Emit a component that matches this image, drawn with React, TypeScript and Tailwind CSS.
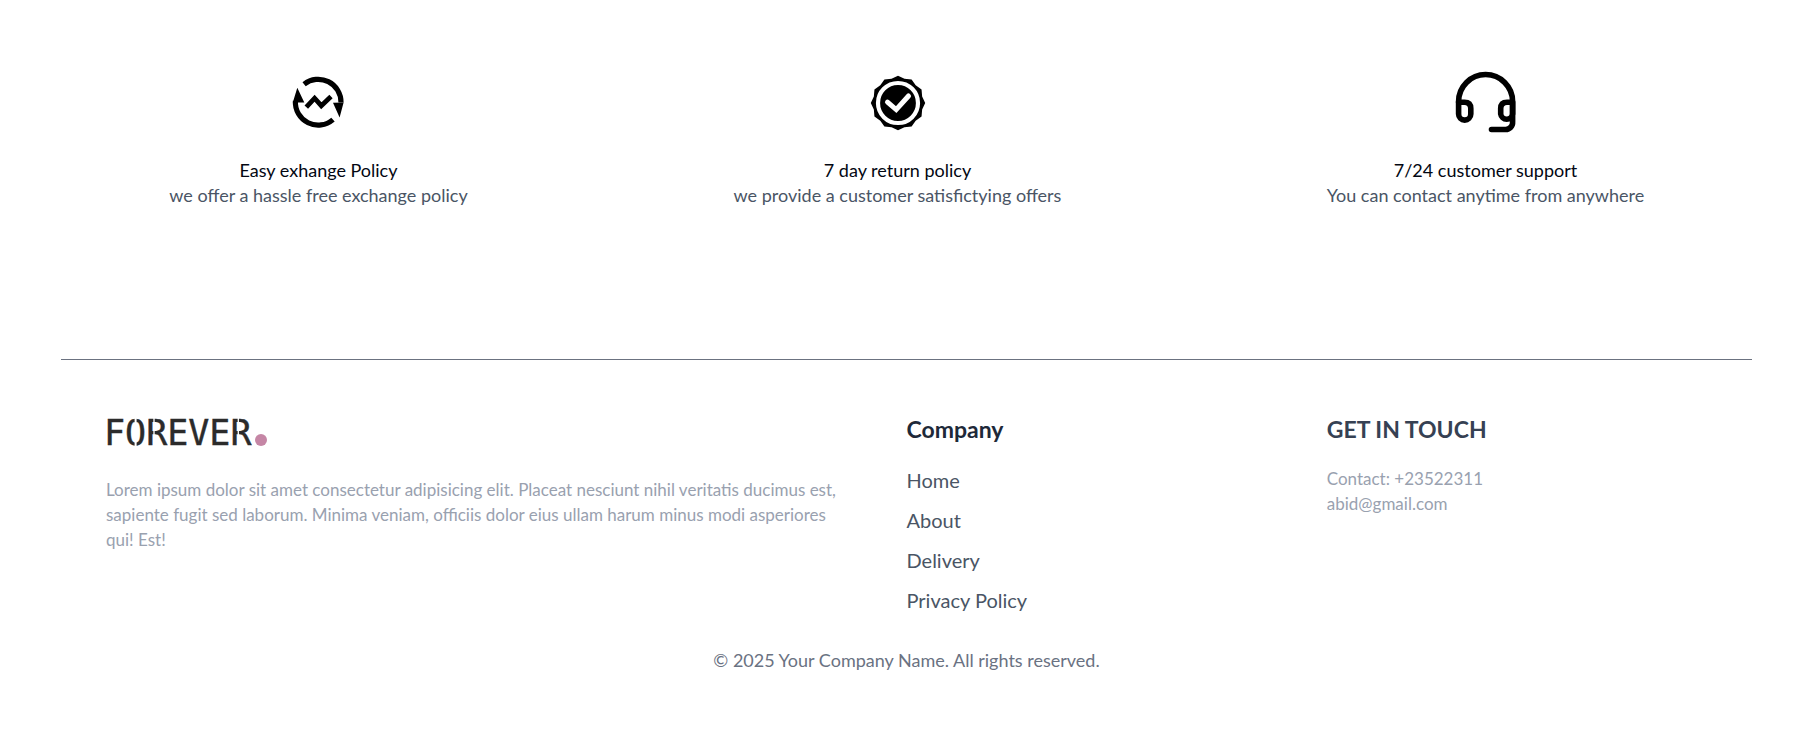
const links = ["Home", "About", "Delivery", "Privacy Policy"];

function ExchangeIcon() {
  return (
    <svg viewBox="-1 0 80 75" className="h-[75px] w-20" aria-hidden="true">
      <g fill="none" stroke="#000" strokeWidth="5.2">
        <path d="M24.1 19.2A22.8 22.8 0 0 1 61 37.5" />
        <path d="M53 54.6A22.8 22.8 0 0 1 15.4 36" />
        <path d="M26.3 42.2L34.6 33.2L41.3 40.7L51 31.6" strokeWidth="4.8" />
      </g>
      <path d="M17.3 22.8L12.8 37.5L24.3 37.5Z M53 37.8L63.6 37.5L59.6 52.5Z" />
    </svg>
  );
}

function ReturnIcon() {
  const points = Array.from({ length: 24 }, (_, i) => {
    const r = i % 2 ? 25 : 27.2;
    const a = (i * Math.PI) / 12;
    return `${38 + r * Math.sin(a)},${38 - r * Math.cos(a)}`;
  }).join(" ");
  return (
    <svg viewBox="0 0 76 75" className="h-[75px] w-[76px]" aria-hidden="true">
      <polygon points={points} />
      <circle cx="38" cy="38" r="20" fill="none" stroke="#fff" strokeWidth="4.2" />
      <path d="M27.5 37.2L36.2 44.6L48.5 31" fill="none" stroke="#fff" strokeWidth="5" strokeLinecap="round" />
    </svg>
  );
}

function SupportIcon() {
  return (
    <svg viewBox="1 0 90 75" className="h-[75px] w-[90px]" aria-hidden="true">
      <g fill="none" stroke="#000" strokeWidth="5.6" strokeLinecap="round" strokeLinejoin="round">
        <path d="M18.6 37V36.5A27 27 0 0 1 72.6 36.5V57A7 7 0 0 1 65.6 64.5H51.5" />
        <path d="M18.6 37.2H24.5Q30.8 37.2 30.8 43.5V49A6.1 6.1 0 0 1 18.6 49Z" />
        <path d="M72.6 37.2H67Q60.7 37.2 60.7 43.5V49A6 6 0 0 0 72.6 49Z" />
      </g>
    </svg>
  );
}

function Logo() {
  return (
    <svg viewBox="-4 0 168 48" className="-ml-1 h-12 w-[168px]" role="img" aria-label="Forever">
      <text
        x="-2"
        y="33"
        fontSize="35"
        fill="#2b2b2b"
        stroke="#2b2b2b"
        strokeWidth="0.4"
        fontFamily="'DejaVu Sans Mono', monospace"
      >
        FOREVER
      </text>
      <g stroke="#fff">
        <path d="M29.6 4V37" strokeWidth="2" />
        <path d="M48 4V37M132.3 4V37" strokeWidth="1.3" />
      </g>
      <circle cx="155" cy="28" r="6" fill="#c586a5" />
    </svg>
  );
}

const features = [
  { icon: <ExchangeIcon />, title: "Easy exhange Policy", text: "we offer a hassle free exchange policy", width: "w-[295px]" },
  { icon: <ReturnIcon />, title: "7 day return policy", text: "we provide a customer satisfictying offers", width: "w-[322px]" },
  { icon: <SupportIcon />, title: "7/24 customer support", text: "You can contact anytime from anywhere", width: "w-[313px]" },
];

export default function App() {
  return (
    <div className="bg-white pr-[59px] pb-16 pl-[61px] font-['Lato',sans-serif] text-[18px] leading-[25px]">
      <section className="flex justify-between px-[110px] pt-[65px]">
        {features.map((f) => (
          <div key={f.title} className={`flex flex-col items-center whitespace-nowrap text-center ${f.width}`}>
            {f.icon}
            <p className="mt-[18px] text-gray-950">{f.title}</p>
            <p className="text-gray-600">{f.text}</p>
          </div>
        ))}
      </section>

      <footer className="mt-[151px] border-t border-[#6b7280]">
        <div className="grid grid-cols-[2fr_1fr_1fr] gap-10 px-[45px] pt-[52px]">
          <div>
            <Logo />
            <p className="mt-[17px] text-[17px] text-gray-400">
              Lorem ipsum dolor sit amet consectetur adipisicing elit. Placeat nesciunt nihil veritatis ducimus est,
              sapiente fugit sed laborum. Minima veniam, officiis dolor eius ullam harum minus modi asperiores
              qui!&nbsp;Est!
            </p>
          </div>
          <div>
            <h2 className="mt-[2px] text-[23px] leading-[30px] font-bold text-gray-800">Company</h2>
            <ul className="mt-[22px] flex flex-col gap-3 text-[20px] leading-[28px] text-gray-600">
              {links.map((l) => (
                <li key={l}>
                  <a href="#">{l}</a>
                </li>
              ))}
            </ul>
          </div>
          <div>
            <h2 className="mt-[2px] text-[23px] leading-[30px] font-bold text-gray-700">GET IN TOUCH</h2>
            <p className="mt-[22px] text-[17px] text-gray-400">Contact: +23522311</p>
            <p className="text-[17px] text-gray-400">abid@gmail.com</p>
          </div>
        </div>
        <p className="mt-[34px] text-center text-gray-500">© 2025 Your Company Name. All rights reserved.</p>
      </footer>
    </div>
  );
}
